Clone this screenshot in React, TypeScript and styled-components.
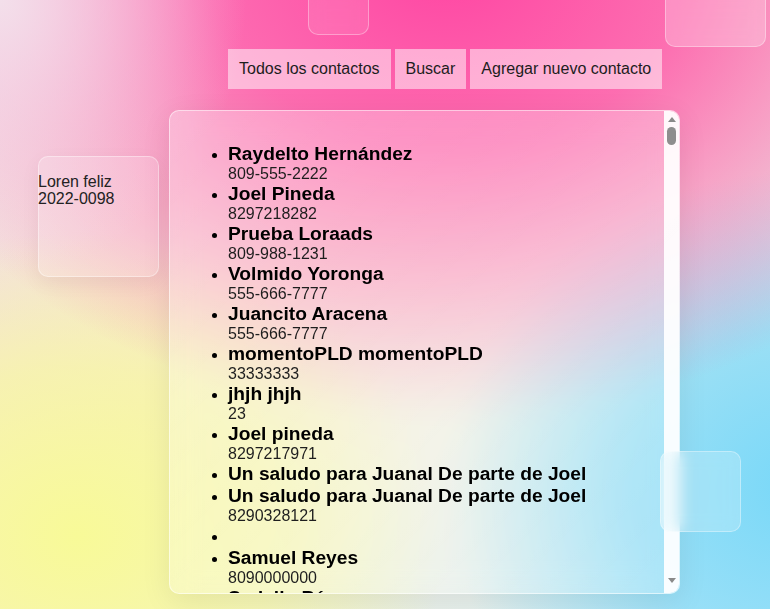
import styled, { createGlobalStyle } from "styled-components";

interface Contact {
  name: string;
  phone?: string;
}

const contacts: Contact[] = [
  { name: "Raydelto Hernández", phone: "809-555-2222" },
  { name: "Joel Pineda", phone: "8297218282" },
  { name: "Prueba Loraads", phone: "809-988-1231" },
  { name: "Volmido Yoronga", phone: "555-666-7777" },
  { name: "Juancito Aracena", phone: "555-666-7777" },
  { name: "momentoPLD momentoPLD", phone: "33333333" },
  { name: "jhjh jhjh", phone: "23" },
  { name: "Joel pineda", phone: "8297217971" },
  { name: "Un saludo para Juanal De parte de Joel" },
  { name: "Un saludo para Juanal De parte de Joel", phone: "8290328121" },
  { name: "" },
  { name: "Samuel Reyes", phone: "8090000000" },
  { name: "Sadalio Pérez", phone: "809-111-2222" },
];

const GlobalStyle = createGlobalStyle`
  html, body {
    margin: 0;
    padding: 0;
  }
  body {
    font-family: "Liberation Sans", Arial, sans-serif;
    overflow: hidden;
  }
`;

const Page = styled.div`
  position: relative;
  width: 770px;
  height: 609px;
  overflow: hidden;
  background:
    radial-gradient(ellipse 32% 45% at 0% 0%, rgba(243, 226, 236, 0.95) 0%, rgba(243, 226, 236, 0) 100%),
    radial-gradient(ellipse 78% 75% at 58% -6%, #ff45a3 0%, rgba(255, 78, 166, 0.8) 40%, rgba(255, 110, 180, 0) 100%),
    radial-gradient(ellipse 46% 52% at 104% 80%, #78d8f8 0%, rgba(125, 217, 248, 0.7) 50%, rgba(150, 222, 246, 0) 100%),
    radial-gradient(ellipse 48% 50% at 10% 88%, #f8fa98 0%, rgba(248, 250, 152, 0.6) 55%, rgba(248, 250, 152, 0) 100%),
    linear-gradient(135deg, #f2dbe6 0%, #f5e8d2 40%, #f1f0e2 62%, #d6eef8 100%);
`;

const Glass = styled.div<{ $left: number; $top: number; $size: number; $tint?: number }>`
  position: absolute;
  left: ${(p) => p.$left}px;
  top: ${(p) => p.$top}px;
  width: ${(p) => p.$size}px;
  height: ${(p) => p.$size}px;
  border-radius: 10px;
  background: rgba(255, 255, 255, ${(p) => p.$tint ?? 0.15});
  border: 1px solid rgba(255, 255, 255, 0.35);
  backdrop-filter: blur(8px);
  box-sizing: border-box;
  z-index: 2;
`;

const Nav = styled.nav`
  display: flex;
  gap: 4px;
  padding: 49px 0 0 228px;
`;

const NavButton = styled.button`
  height: 40px;
  padding: 0 11px;
  border: none;
  border-radius: 0;
  background: rgba(255, 255, 255, 0.5);
  color: #1d1d1d;
  font-family: "Liberation Sans", Arial, sans-serif;
  font-size: 16px;
  cursor: pointer;
`;

const Main = styled.div`
  display: flex;
  align-items: flex-start;
  gap: 10px;
  padding: 21px 0 0 38px;
`;

const Card = styled.div`
  box-sizing: border-box;
  width: 121px;
  height: 121px;
  margin-top: 46px;
  padding-top: 16px;
  border-radius: 10px;
  border: 1px solid rgba(255, 255, 255, 0.4);
  background: rgba(255, 255, 255, 0.18);
  box-shadow: 0 6px 20px rgba(0, 0, 0, 0.05);
  font-size: 16px;
  line-height: 17px;
  color: #222;
`;

const CardText = styled.div`
  margin-left: -1px;
`;

const Panel = styled.section`
  box-sizing: border-box;
  display: flex;
  width: 511px;
  height: 484px;
  overflow: hidden;
  border-radius: 10px;
  border: 1px solid rgba(255, 255, 255, 0.55);
  background: linear-gradient(135deg, rgba(255, 255, 255, 0.3), rgba(255, 255, 255, 0.2));
  backdrop-filter: blur(14px);
  box-shadow: 0 8px 30px rgba(0, 0, 0, 0.08);
`;

const Content = styled.div`
  flex: 1;
  overflow: hidden;
  padding: 16px 0 0 18px;
`;

const ScrollTrack = styled.div`
  display: flex;
  flex-direction: column;
  align-items: center;
  width: 15px;
  background: rgba(255, 255, 255, 0.92);
`;

const Arrow = styled.svg<{ $down?: boolean }>`
  display: block;
  flex: none;
  margin: ${(p) => (p.$down ? "0 0 10px" : "6px 0 5px")};
`;

const Thumb = styled.div`
  width: 9px;
  height: 18px;
  border-radius: 5px;
  background: #8e8e8e;
`;

const Spacer = styled.div`
  flex: 1;
`;

const List = styled.ul`
  margin: 16px 0 0;
  padding-left: 40px;
`;

const Item = styled.li`
  color: #000;
`;

const Name = styled.h3`
  margin: 0;
  font-size: 19.2px;
  font-weight: bold;
  color: #000;
`;

const Phone = styled.div`
  font-size: 16px;
  color: #1e1e1e;
`;

export default function App() {
  return (
    <Page>
      <GlobalStyle />
      <Glass $left={308} $top={-26} $size={61} $tint={0.1} />
      <Glass $left={665} $top={-54} $size={101} $tint={0.25} />
      <Glass $left={660} $top={451} $size={81} $tint={0.2} />
      <Nav>
        <NavButton>Todos los contactos</NavButton>
        <NavButton>Buscar</NavButton>
        <NavButton>Agregar nuevo contacto</NavButton>
      </Nav>
      <Main>
        <Card>
          <CardText>
            Loren feliz
            <br />
            2022-0098
          </CardText>
        </Card>
        <Panel>
          <Content>
            <List>
              {contacts.map((c, i) => (
                <Item key={i}>
                  <Name>{c.name || "\u00a0"}</Name>
                  {c.phone && <Phone>{c.phone}</Phone>}
                </Item>
              ))}
            </List>
          </Content>
          <ScrollTrack>
            <Arrow width="8" height="5" viewBox="0 0 8 5">
              <path d="M4 0 L8 5 L0 5 Z" fill="#8a8a8a" />
            </Arrow>
            <Thumb />
            <Spacer />
            <Arrow $down width="8" height="5" viewBox="0 0 8 5">
              <path d="M0 0 L8 0 L4 5 Z" fill="#8a8a8a" />
            </Arrow>
          </ScrollTrack>
        </Panel>
      </Main>
    </Page>
  );
}
